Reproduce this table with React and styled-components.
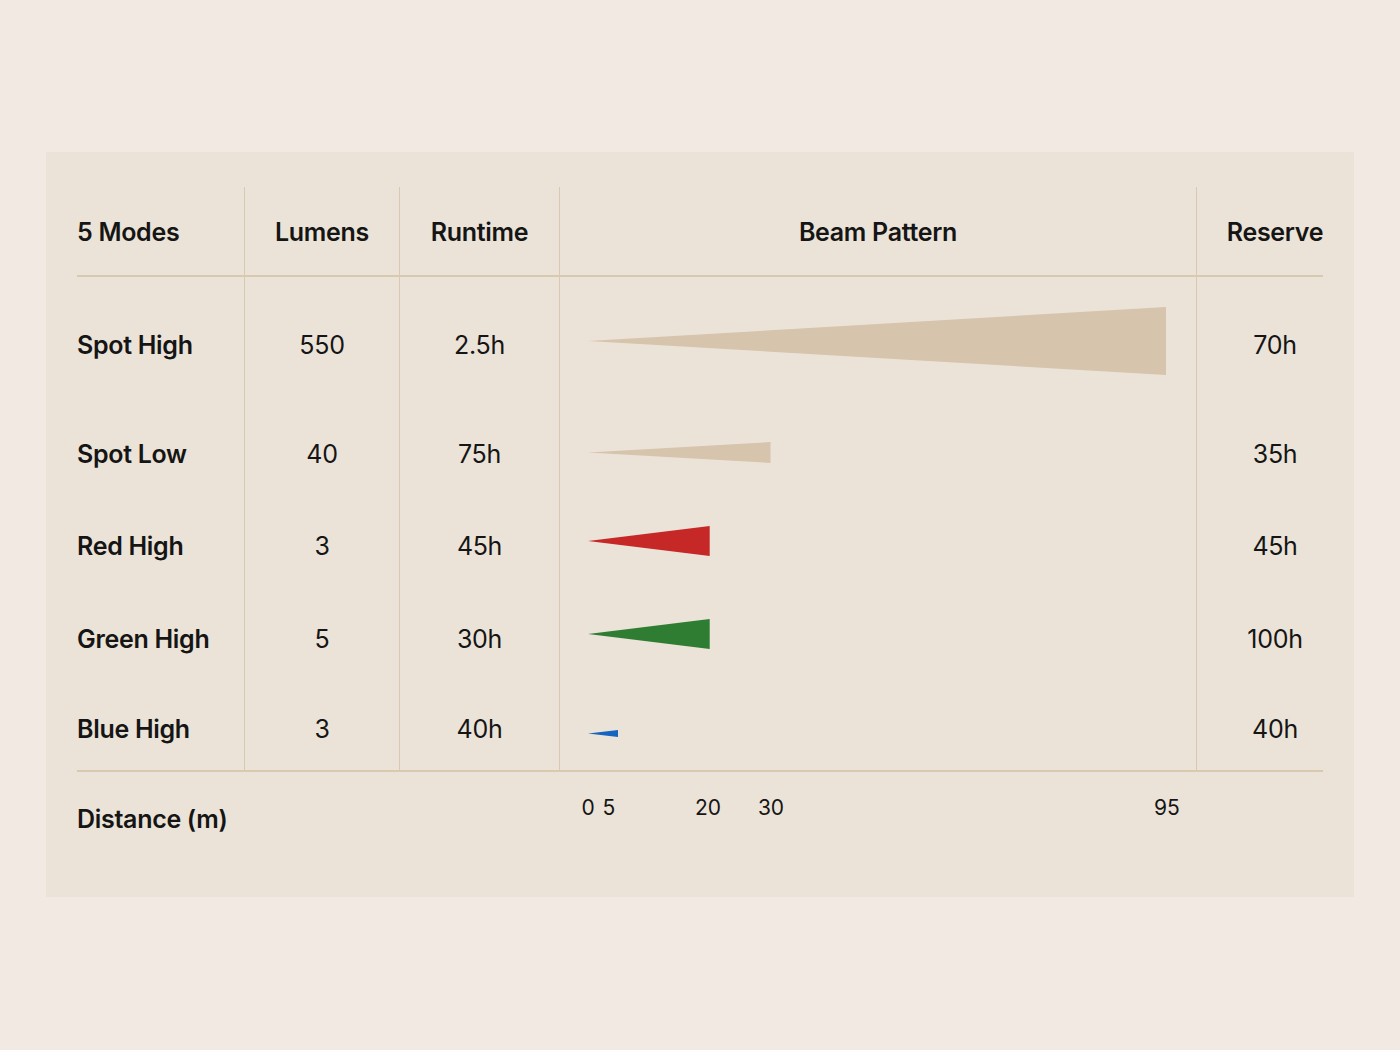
import React from 'react'
import styled, { createGlobalStyle } from 'styled-components'

const GlobalStyle = createGlobalStyle`
  html, body {
    margin: 0;
    padding: 0;
    background: #f2eae2;
  }
  body {
    font-family: Inter, "Liberation Sans", sans-serif;
    color: #151515;
  }
`

const Page = styled.div`
  width: 1400px;
  height: 1050px;
  padding: 152px 46px 0;
  box-sizing: border-box;
`

const Card = styled.div`
  background: #ebe3d7;
  padding: 35px 31px 31px;
`

const Row = styled.div`
  display: grid;
  grid-template-columns: 167px 155px 160px 637px 127px;
  height: ${p => p.h}px;
  border-bottom: ${p => (p.line ? '2px solid #d9c9b1' : 'none')};
  box-sizing: border-box;
`

const Cell = styled.div`
  display: flex;
  align-items: center;
  justify-content: ${p => (p.left ? 'flex-start' : 'center')};
  padding-left: ${p => p.pl || 0}px;
  padding-top: ${p => p.pt || 2}px;
  border-left: ${p => (p.divider ? '1.5px solid #d9c9b1' : 'none')};
  font-size: 25px;
  font-weight: ${p => (p.bold ? 600 : 400)};
  letter-spacing: -0.3px;
  white-space: nowrap;
`

const BeamCell = styled.div`
  display: flex;
  align-items: center;
  padding-left: 28px;
  border-left: 1.5px solid #d9c9b1;
`

const Beam = styled.svg`
  display: block;
  margin-top: ${p => p.shift * 2}px;
`

const Axis = styled.div`
  position: relative;
`

const Tick = styled.span`
  position: absolute;
  top: 23px;
  transform: translateX(-50%);
  font-size: 21px;
  line-height: 26px;
`

const FootLabel = styled.div`
  padding-top: 32px;
  font-size: 25px;
  font-weight: 600;
  letter-spacing: -0.3px;
  white-space: nowrap;
`

const SCALE = 578 / 95

const modes = [
  { name: 'Spot High', lumens: '550', runtime: '2.5h', reserve: '70h', dist: 95, spread: 68, color: '#d6c4ad', h: 129, shift: -1, pt: 6 },
  { name: 'Spot Low', lumens: '40', runtime: '75h', reserve: '35h', dist: 30, spread: 21, color: '#d6c4ad', h: 94, shift: -1 },
  { name: 'Red High', lumens: '3', runtime: '45h', reserve: '45h', dist: 20, spread: 30, color: '#c62828', h: 90, shift: -4 },
  { name: 'Green High', lumens: '5', runtime: '30h', reserve: '100h', dist: 20, spread: 30, color: '#2e7d32', h: 96, shift: -4 },
  { name: 'Blue High', lumens: '3', runtime: '40h', reserve: '40h', dist: 5, spread: 7, color: '#1565c0', h: 86, shift: 5 },
]

const ticks = [
  { label: '0', x: 29 },
  { label: '5', x: 50 },
  { label: '20', x: 149 },
  { label: '30', x: 212 },
  { label: '95', x: 608 },
]

const BeamShape = ({ dist, spread, color, shift }) => {
  const w = dist * SCALE
  return (
    <Beam width={w} height={spread} viewBox={`0 0 ${w} ${spread}`} shift={shift}>
      <polygon points={`0,${spread / 2} ${w},0 ${w},${spread}`} fill={color} />
    </Beam>
  )
}

const App = () => {
  return (
    <Page>
      <GlobalStyle />
      <Card>
        <Row h={90} line>
          <Cell left bold>5 Modes</Cell>
          <Cell bold divider>Lumens</Cell>
          <Cell bold divider>Runtime</Cell>
          <Cell bold divider>Beam Pattern</Cell>
          <Cell bold divider pl={30}>Reserve</Cell>
        </Row>
        {modes.map((m, i) => (
          <Row key={m.name} h={m.h} line={i === modes.length - 1}>
            <Cell left bold pt={m.pt}>{m.name}</Cell>
            <Cell divider pt={m.pt}>{m.lumens}</Cell>
            <Cell divider pt={m.pt}>{m.runtime}</Cell>
            <BeamCell>
              <BeamShape dist={m.dist} spread={m.spread} color={m.color} shift={m.shift} />
            </BeamCell>
            <Cell divider pl={30} pt={m.pt}>{m.reserve}</Cell>
          </Row>
        ))}
        <Row h={94}>
          <FootLabel>Distance (m)</FootLabel>
          <div />
          <div />
          <Axis>
            {ticks.map(t => (
              <Tick key={t.label} style={{ left: t.x }}>{t.label}</Tick>
            ))}
          </Axis>
          <div />
        </Row>
      </Card>
    </Page>
  )
}

export default App
